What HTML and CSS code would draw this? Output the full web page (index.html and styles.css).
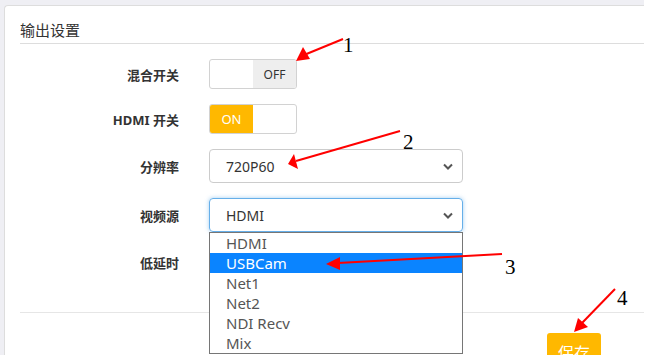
FILE: index.html
```html
<!DOCTYPE html>
<html lang="zh-CN">
<head>
    <meta charset="UTF-8">
    <title>输出设置</title>
    <link rel="stylesheet" href="styles.css">
</head>
<body>
    <div class="page">
        <div class="card">
            <div class="card-title">输出设置</div>

            <div class="form">
                <div class="row">
                    <label class="label">混合开关</label>
                    <div class="switch">
                        <span class="half"></span>
                        <span class="half off">OFF</span>
                    </div>
                </div>

                <div class="row">
                    <label class="label">HDMI 开关</label>
                    <div class="switch">
                        <span class="half on">ON</span>
                        <span class="half"></span>
                    </div>
                </div>

                <div class="row">
                    <label class="label">分辨率</label>
                    <div class="select">
                        <span>720P60</span>
                        <svg class="chev" width="10" height="7" viewBox="0 0 10 7"><path d="M1 1.5 L5 5.5 L9 1.5" fill="none" stroke="#555" stroke-width="2"/></svg>
                    </div>
                </div>

                <div class="row">
                    <label class="label">视频源</label>
                    <div class="select focus">
                        <span>HDMI</span>
                        <svg class="chev" width="10" height="7" viewBox="0 0 10 7"><path d="M1 1.5 L5 5.5 L9 1.5" fill="none" stroke="#555" stroke-width="2"/></svg>
                        <ul class="dropdown">
                            <li>HDMI</li>
                            <li class="active">USBCam</li>
                            <li>Net1</li>
                            <li>Net2</li>
                            <li>NDI Recv</li>
                            <li>Mix</li>
                        </ul>
                    </div>
                </div>

                <div class="row">
                    <label class="label">低延时</label>
                    <!-- covered by the open dropdown -->
                    <div class="switch">
                        <span class="half"></span>
                        <span class="half off"></span>
                    </div>
                </div>
            </div>

            <div class="footer">
                <button class="save-btn">保存</button>
            </div>
        </div>
    </div>

    <!-- annotation arrows drawn over the screenshot -->
    <svg class="marks" width="660" height="355" viewBox="0 0 660 355">
        <g stroke="#f00" stroke-width="2" fill="none">
            <line x1="343" y1="39" x2="304" y2="55"/>
            <line x1="400" y1="131" x2="296" y2="161"/>
            <line x1="502" y1="254" x2="338" y2="263"/>
            <line x1="615" y1="289" x2="582" y2="323"/>
        </g>
        <g fill="#f00">
            <polygon points="296,61 303,47 310,59"/>
            <polygon points="288,164 294,154 298,169"/>
            <polygon points="326,264 340,257 340,270"/>
            <polygon points="574,332 578,318 588,327"/>
        </g>
        <g class="num">
            <text x="343" y="52">1</text>
            <text x="403" y="149">2</text>
            <text x="505" y="274">3</text>
            <text x="617" y="305">4</text>
        </g>
    </svg>
</body>
</html>
```

FILE: styles.css
```css
* {
    box-sizing: border-box;
}

body {
    margin: 0;
    background: #fff;
    font-family: "Noto Sans", "Noto Sans CJK SC", sans-serif;
    color: #333;
    overflow: hidden;
}

.page {
    width: 644px;
    height: 355px;
    background: #efeff4;
    padding: 5px 0 0 4px;
}

.card {
    height: 100%;
    background: #fff;
    border-left: 1px solid #ddd;
    border-top: 1px solid #ddd;
    border-top-left-radius: 4px;
    padding-left: 15px;
}

.card-title {
    height: 38px;
    padding-top: 14px;
    font-size: 15px;
    line-height: 20px;
    border-bottom: 1px solid #ddd;
}

.form {
    padding-top: 15px;
    padding-bottom: 35px;
    border-bottom: 1px solid #e6e6e6;
}

.row {
    display: flex;
    align-items: center;
    gap: 30px;
    margin-bottom: 15px;
}

.row:last-child {
    margin-bottom: 0;
}

.label {
    width: 159px;
    text-align: right;
    font-size: 13px;
    font-weight: bold;
    color: #333;
}

.switch {
    display: flex;
    width: 88px;
    height: 30px;
    border: 1px solid #d2d2d2;
    border-radius: 3px;
    overflow: hidden;
}

.half {
    flex: 1;
    display: flex;
    align-items: center;
    justify-content: center;
    font-size: 12px;
}

.half.off {
    background: #eee;
    color: #333;
}

.half.on {
    background: #ffb800;
    color: #fff;
    font-size: 13px;
}

.select {
    position: relative;
    display: flex;
    align-items: center;
    justify-content: space-between;
    width: 254px;
    height: 34px;
    padding: 0 9px 0 16px;
    border: 1px solid #ccc;
    border-radius: 4px;
    font-size: 14px;
    color: #333;
}

.select.focus {
    border-color: #66afe9;
    box-shadow: 0 0 4px rgba(102, 175, 233, 0.6);
}

.dropdown {
    position: absolute;
    top: 33px;
    left: -1px;
    width: 254px;
    margin: 0;
    padding: 0;
    list-style: none;
    background: #fff;
    border: 1px solid #767676;
    z-index: 2;
}

.dropdown li {
    height: 20px;
    line-height: 20px;
    padding-left: 16px;
    font-size: 15px;
    color: #555;
}

.dropdown li.active {
    background: #0a84ff;
    color: #fff;
}

.footer {
    display: flex;
    justify-content: flex-end;
    padding: 20px 43px 0 0;
}

.save-btn {
    width: 54px;
    height: 38px;
    border: none;
    border-radius: 3px;
    background: #ffb800;
    color: #fff;
    font-family: "Noto Sans CJK SC", sans-serif;
    font-size: 16px;
}

.marks {
    position: absolute;
    top: 0;
    left: 0;
    z-index: 5;
    pointer-events: none;
}

.num {
    font-family: "Liberation Serif", serif;
    font-size: 21px;
}
```
